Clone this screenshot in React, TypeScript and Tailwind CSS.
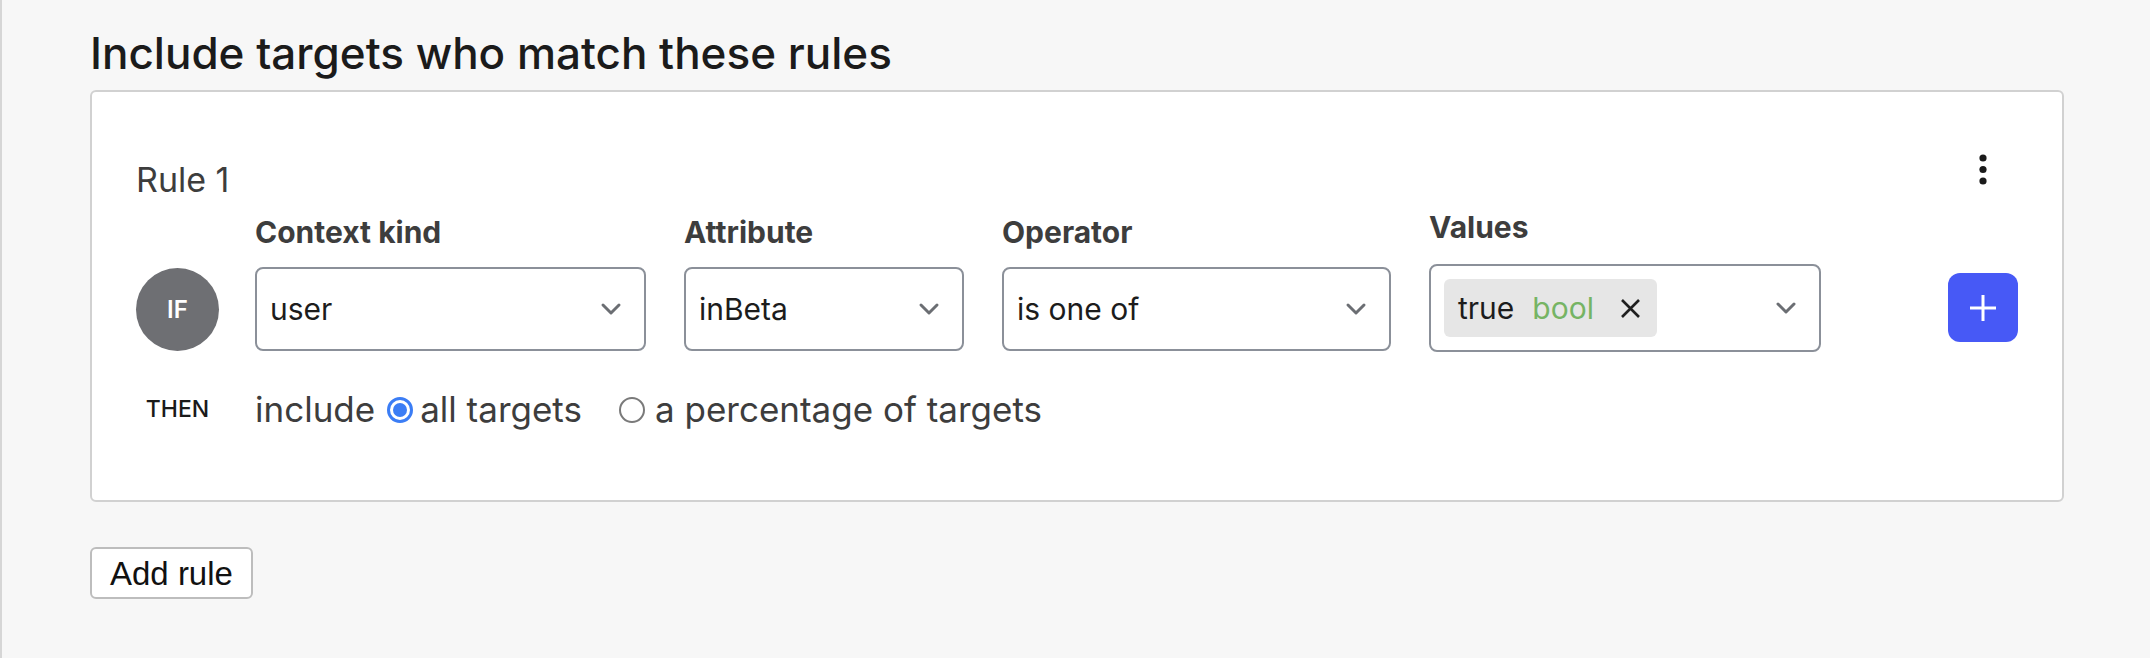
import React from "react";

const fields = [
  { label: "Context kind", value: "user", width: "w-[391px]" },
  { label: "Attribute", value: "inBeta", width: "w-[280px]" },
  { label: "Operator", value: "is one of", width: "w-[389px]" },
];

function Chevron() {
  return (
    <svg width="22" height="14" viewBox="0 0 22 14" className="shrink-0">
      <polyline points="3,3 11,11 19,3" fill="none" stroke="#6b6e73" strokeWidth="3" strokeLinecap="round" strokeLinejoin="round" />
    </svg>
  );
}

function Select({ value, width }: { value: string; width: string }) {
  return (
    <div className={`flex h-[84px] ${width} items-center justify-between rounded-[8px] border-2 border-[#8b9099] bg-white pl-[13px] pr-[22px] text-[30px] text-[#1c1c1c]`}>
      <span>{value}</span>
      <Chevron />
    </div>
  );
}

function Radio({ checked }: { checked?: boolean }) {
  if (checked) {
    return (
      <span className="flex h-[26px] w-[26px] items-center justify-center rounded-full border-[3px] border-[#3b7df5] bg-white">
        <span className="h-[14px] w-[14px] rounded-full bg-[#3b7df5]" />
      </span>
    );
  }
  return <span className="block h-[26px] w-[26px] rounded-full border-2 border-[#7a7a7a] bg-white" />;
}

export default function App() {
  return (
    <div className="min-h-screen border-l-2 border-[#d6d6d6] bg-[#f7f7f7] pl-[88px] pr-[86px] pt-[27px] font-['Inter',sans-serif]">
      <h2 className="text-[44px] font-medium leading-[53px] text-[#1b1b1b]">Include targets who match these rules</h2>

      <div className="mt-[10px] rounded-[6px] border-2 border-[#d1d1d1] bg-white pb-[70px] pl-[44px] pr-[44px] pt-[67px]">
        {/* header */}
        <div className="flex items-start justify-between">
          <span className="text-[34px] leading-[41px] text-[#3d3d3d]">Rule 1</span>
          <div className="-mt-[5px] flex w-[70px] justify-center">
            <svg width="10" height="32" viewBox="0 0 10 32">
              <circle cx="5" cy="4" r="3.6" fill="#1a1a1a" />
              <circle cx="5" cy="15.5" r="3.6" fill="#1a1a1a" />
              <circle cx="5" cy="27" r="3.6" fill="#1a1a1a" />
            </svg>
          </div>
        </div>

        {/* IF row */}
        <div className="mt-[10px] flex items-end">
          <div className="flex w-[83px] shrink-0">
            <div className="flex h-[83px] w-[83px] items-center justify-center rounded-full bg-[#6e6f73] text-[24px] font-semibold text-white">IF</div>
          </div>
          <div className="ml-[36px] flex items-end gap-[38px]">
            {fields.map((f) => (
              <div key={f.label} className="flex flex-col">
                <span className="text-[30px] font-bold leading-[35px] text-[#3d3d3d]">{f.label}</span>
                <div className="mt-[17px]">
                  <Select value={f.value} width={f.width} />
                </div>
              </div>
            ))}
            <div className="-mb-[1px] flex flex-col">
              <span className="text-[30px] font-bold leading-[35px] text-[#3d3d3d]">Values</span>
              <div className="mt-[19px] flex h-[88px] w-[392px] items-center justify-between rounded-[8px] border-2 border-[#8b9099] bg-white pl-[13px] pr-[22px]">
                <div className="flex h-[58px] items-center rounded-[6px] bg-[#e6e6e6] pl-[14px] pr-[16px] text-[30px]">
                  <span className="text-[#1c1c1c]">true</span>
                  <span className="ml-[18px] text-[#76b464]">bool</span>
                  <svg width="21" height="21" viewBox="0 0 21 21" className="ml-[26px]">
                    <path d="M2 2 L19 19 M19 2 L2 19" stroke="#1f1f1f" strokeWidth="2.6" />
                  </svg>
                </div>
                <Chevron />
              </div>
            </div>
          </div>
          <div className="mb-[9px] ml-auto flex h-[69px] w-[70px] items-center justify-center rounded-[12px] bg-[#4759f6]">
            <svg width="26" height="26" viewBox="0 0 26 26">
              <path d="M13 0 V26 M0 13 H26" stroke="white" strokeWidth="3" />
            </svg>
          </div>
        </div>

        {/* THEN row */}
        <div className="mt-[38px] flex items-center">
          <span className="w-[83px] shrink-0 text-center text-[23px] font-medium text-[#1a1a1a]">THEN</span>
          <div className="ml-[36px] flex items-center text-[35px] leading-[41px] text-[#3d3d3d]">
            <span>include</span>
            <span className="ml-[12px]"><Radio checked /></span>
            <span className="ml-[7px]">all targets</span>
            <span className="ml-[37px]"><Radio /></span>
            <span className="ml-[10px]">a percentage of targets</span>
          </div>
        </div>
      </div>

      <button className="mt-[45px] h-[52px] rounded-[6px] border-2 border-[#bdbdbd] bg-white px-[18px] font-['Liberation_Sans',Arial,sans-serif] text-[33px] text-[#111]">
        Add rule
      </button>
    </div>
  );
}
